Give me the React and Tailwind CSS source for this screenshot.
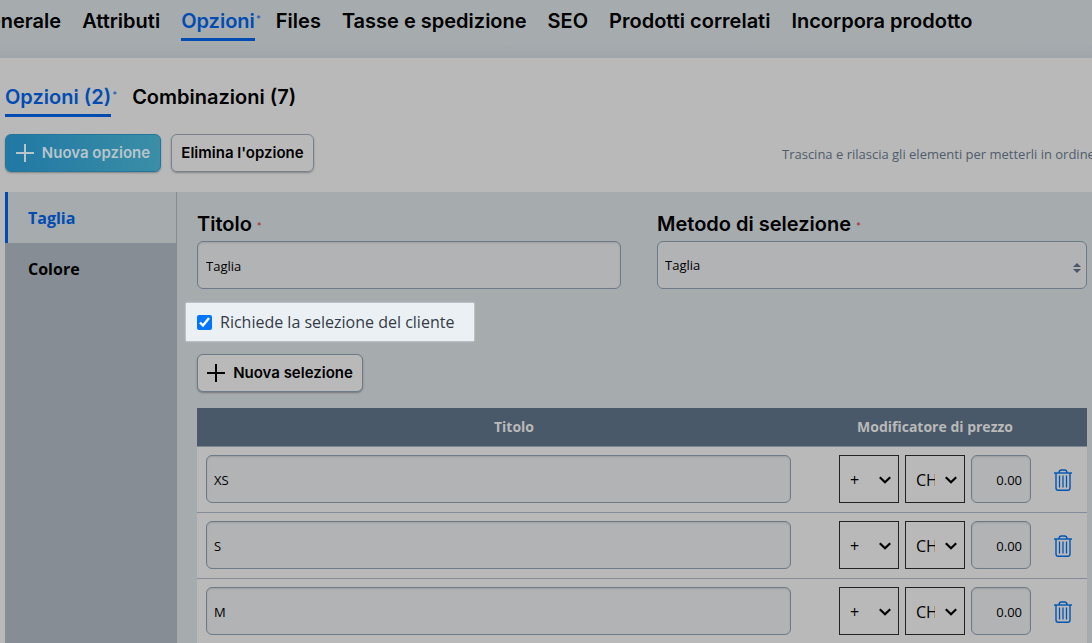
import { useState } from 'react';

const TABS = [
  { id: 'generale', label: 'Generale' },
  { id: 'attributi', label: 'Attributi' },
  { id: 'opzioni', label: 'Opzioni' },
  { id: 'files', label: 'Files' },
  { id: 'tasse', label: 'Tasse e spedizione' },
  { id: 'seo', label: 'SEO' },
  { id: 'correlati', label: 'Prodotti correlati' },
  { id: 'incorpora', label: 'Incorpora prodotto' },
];

const SELEZIONI = ['XS', 'S', 'M'];

const Plus = () => (
  <svg className="h-[18px] w-[18px] shrink-0" viewBox="0 0 18 18" fill="none" stroke="currentColor" strokeWidth="2">
    <path d="M9 0v18M0 9h18" />
  </svg>
);

const Trash = () => (
  <svg className="h-[22px] w-[18px]" viewBox="0 0 18 22" fill="none" stroke="currentColor">
    <path strokeWidth="1.4" d="M0 4h18" />
    <path strokeWidth="1.4" d="M5 4c0-2 1-3 2.5-3h3c1.5 0 2.5 1 2.5 3" />
    <path strokeWidth="1.4" d="M2 4v15c0 1.500.700 2.200 2.200 2.200h9.600c1.500 0 2.200-.700 2.200-2.200V4" />
    <path strokeWidth="1.3" d="M5.500 6.500v12M9 6.500v12M12.500 6.500v12" />
  </svg>
);

const Tab = ({ label, active, modified }) => (
  <a
    href="#"
    className={`relative shrink-0 whitespace-nowrap border-b-3 pb-[5px] leading-6 ${
      active ? 'border-[#004cb3] text-[#004cb3]' : 'border-transparent text-black'
    }`}
  >
    {label}
    {modified && <span className="absolute -right-1.5 -top-0.5 text-[9px] font-normal">*</span>}
  </a>
);

const Label = ({ htmlFor, children }) => (
  <label htmlFor={htmlFor} className="block font-[Inter] text-xl font-semibold leading-7 text-black">
    {children} <span className="align-[2px] text-[9px] font-normal text-[#b3202a]">*</span>
  </label>
);

const SmallSelect = ({ label, options }) => (
  <div className="relative w-[60px]">
    <select
      aria-label={label}
      className="block h-12 w-full appearance-none border border-[#222] bg-transparent pl-2.5 pr-[29px] pt-0.5 text-base text-black"
    >
      {options.map(option => (
        <option key={option}>{option}</option>
      ))}
    </select>
    <svg
      className="pointer-events-none absolute right-2 top-[21px] h-2 w-3"
      viewBox="0 0 12 8"
      fill="none"
      stroke="#000"
      strokeWidth="2.2"
    >
      <path d="M.8 1.200 6 6.200l5.200-5" />
    </svg>
  </div>
);

const FilaSelezione = ({ titolo }) => (
  <tr>
    <td className="h-[66px] border-b border-[#868d98] pl-[9px] pr-10 pt-2 align-top">
      <input
        type="text"
        aria-label="Titolo"
        defaultValue={titolo}
        className="block h-12 w-full rounded-md border border-[#6f7a87] bg-[#b2b3b5] px-[7px] pt-0.5 text-[13px] text-black shadow-[inset_0_1px_2px_rgba(0,0,0,0.12)]"
      />
    </td>
    <td className="border-b border-[#868d98] px-2 pt-2 align-top">
      <div className="flex gap-1.5">
        <SmallSelect label="Segno" options={['+', '-']} />
        <SmallSelect label="Valuta" options={['CHF', '%']} />
        <input
          type="text"
          aria-label="Modificatore di prezzo"
          defaultValue="0.00"
          className="h-12 w-[60px] rounded-md border border-[#6f7a87] bg-[#b2b3b5] px-2 pt-0.5 text-right text-[13px] text-black shadow-[inset_0_1px_2px_rgba(0,0,0,0.12)]"
        />
      </div>
    </td>
    <td className="border-b border-[#868d98]">
      <button type="button" aria-label="Elimina" className="mx-auto block text-[#0055b3]">
        <Trash />
      </button>
    </td>
  </tr>
);

export default function App() {
  const [richiesta, setRichiesta] = useState(true);

  return (
    <div className="flex h-screen flex-col overflow-hidden bg-[#b9b9b9] font-['Open_Sans','Noto_Sans',sans-serif] text-black">
      <header className="h-[58px] shrink-0 bg-[#a6abae] bg-linear-to-b from-[#a6abae] from-75% to-[#a0a5a9] pt-[9px]">
        <nav className="-ml-[26px] flex gap-[21px] font-[Inter] text-xl font-semibold">
          {TABS.map(tab => (
            <Tab key={tab.id} label={tab.label} active={tab.id === 'opzioni'} modified={tab.id === 'opzioni'} />
          ))}
        </nav>
      </header>

      <main className="flex min-h-0 grow flex-col pl-[5px] pt-[27px]">
        <nav className="flex gap-[21px] font-[Inter] text-xl font-semibold">
          <Tab label="Opzioni (2)" active modified />
          <Tab label="Combinazioni (7)" />
        </nav>

        <div className="mt-[17px] flex shrink-0 items-center gap-2.5 font-[Inter] text-[15px] font-semibold">
          <button
            type="button"
            className="flex h-[38px] w-[156px] items-center justify-center gap-2 rounded-md border border-[#24779b] bg-linear-to-r from-[#2078a4] to-[#3a8ea6] whitespace-nowrap text-[#b9c5cb] shadow-[0_1px_2px_rgba(0,0,0,0.3)]"
          >
            <Plus />
            Nuova opzione
          </button>
          <button
            type="button"
            className="h-[38px] w-[143px] rounded-md border border-[#7a828e] whitespace-nowrap shadow-[0_1px_2px_rgba(0,0,0,0.3)]"
          >
            Elimina l'opzione
          </button>
          <p className="ml-auto w-[310px] whitespace-nowrap pt-1 font-['Open_Sans',sans-serif] text-[13px] font-normal text-[#4f5c6b]">
            Trascina e rilascia gli elementi per metterli in ordine
          </p>
        </div>

        <div className="mt-5 flex min-h-0 grow bg-[#a6abae]">
          <aside className="w-[172px] shrink-0 bg-[#868d95] font-bold">
            <a
              href="#"
              className="flex h-[51px] items-center border-l-3 border-r border-l-[#004cb3] border-r-[#868d95] bg-[#a6abae] pl-5 text-[#004cb3]"
            >
              Taglia
            </a>
            <a href="#" className="flex h-[51px] items-center pl-[23px]">
              Colore
            </a>
          </aside>

          <section className="min-w-0 grow pl-5 pr-[5px] pt-[18px]">
            <div className="grid grid-cols-[424fr_430fr] gap-9">
              <div>
                <Label htmlFor="titolo">Titolo</Label>
                <input
                  id="titolo"
                  type="text"
                  defaultValue="Taglia"
                  className="mt-px block h-12 w-full rounded-md border border-[#6f7a87] bg-[#b2b3b5] px-2 pt-0.5 text-[13px] shadow-[inset_0_1px_2px_rgba(0,0,0,0.12)]"
                />
              </div>
              <div>
                <Label htmlFor="metodo">Metodo di selezione</Label>
                <div className="relative mt-px">
                  <select
                    id="metodo"
                    className="block h-12 w-full appearance-none rounded-md border border-[#6f7a87] bg-[#b2b3b5] px-[7px] pt-0.5 text-[13px]"
                  >
                    <option>Taglia</option>
                    <option>Menu a tendina</option>
                  </select>
                  <svg
                    className="pointer-events-none absolute right-1.5 top-[22px] h-2.5 w-2"
                    viewBox="0 0 8 10"
                    fill="#4a5969"
                  >
                    <path d="M4 0l4 4H0zM4 10l4-4H0z" />
                  </svg>
                </div>
              </div>
            </div>

            <label className="-ml-[11px] mt-3.5 flex h-[38px] w-[288px] items-center gap-2 bg-[#ebf0f4] pl-[11px] whitespace-nowrap text-[#333b47] shadow-[0_0_2px_#ebf0f4]">
              <input
                type="checkbox"
                checked={richiesta}
                onChange={e => setRichiesta(e.target.checked)}
                className="h-[15px] w-[15px] accent-[#0075ff]"
              />
              Richiede la selezione del cliente
            </label>

            <button
              type="button"
              className="mt-[13px] flex h-[38px] w-[166px] items-center justify-center gap-2 rounded-md border border-[#6f7a87] bg-[#b9b9b9] whitespace-nowrap font-[Inter] text-[15px] font-semibold shadow-[0_1px_2px_rgba(0,0,0,0.3)]"
            >
              <Plus />
              Nuova selezione
            </button>

            <table className="mt-4 w-full table-fixed border-separate border-spacing-0 bg-[#b9b9b9]">
              <thead>
                <tr className="bg-[#4a5969] text-sm text-[#b9b9b9]">
                  <th className="h-[39px] border-b border-[#7f8791]">Titolo</th>
                  <th className="w-[208px] border-b border-[#7f8791]">Modificatore di prezzo</th>
                  <th className="w-12 border-b border-[#7f8791]" aria-label="Azioni"></th>
                </tr>
              </thead>
              <tbody>
                {SELEZIONI.map(titolo => (
                  <FilaSelezione key={titolo} titolo={titolo} />
                ))}
              </tbody>
            </table>
          </section>
        </div>
      </main>
    </div>
  );
}
